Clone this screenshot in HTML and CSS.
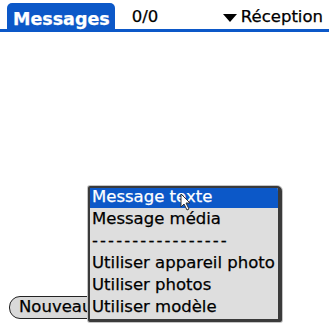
FILE: index.html
```html
<!DOCTYPE html>
<html>
<head>
<meta charset="utf-8">
<link rel="stylesheet" href="styles.css">
</head>
<body>
<div class="screen">
  <div class="header">
    <div class="tab">Messages</div>
    <div class="count">0/0</div>
    <div class="spacer"></div>
    <div class="folder">
      <svg class="tri" width="14" height="8" viewBox="0 0 14 8"><polygon points="0,0 14,0 7,8" fill="#000"/></svg>
      <span>Réception</span>
    </div>
  </div>
  <div class="content"></div>
  <div class="footer">
    <div class="btn">Nouveau</div>
  </div>
  <div class="menu">
    <div class="item sel">Message texte<svg class="cursor" width="12" height="18" viewBox="0 0 12 18"><path d="M1 1 L1 14 L4 11 L7 17 L9 16 L6 10 L10 10 Z" fill="#fff" stroke="#333" stroke-width="1"/></svg></div>
    <div class="item">Message média</div>
    <div class="item dash">-----------------</div>
    <div class="item">Utiliser appareil photo</div>
    <div class="item">Utiliser photos</div>
    <div class="item">Utiliser modèle</div>
  </div>
</div>
</body>
</html>
```
FILE: styles.css
```css
* { box-sizing: border-box; }
html, body { margin: 0; padding: 0; background: #fff; }
.screen {
  position: relative;
  width: 329px;
  height: 323px;
  display: flex;
  flex-direction: column;
  font-family: "DejaVu Sans", sans-serif;
  font-size: 16.5px;
  -webkit-text-stroke: 0.25px currentColor;
  color: #000;
  overflow: hidden;
}
.header {
  height: 32px;
  display: flex;
  align-items: flex-end;
  border-bottom: 3px solid #0c58c8;
}
.tab {
  margin-left: 7px;
  height: 26px;
  padding: 6px 5px 0 6px;
  line-height: 20px;
  background: #0c58c8;
  color: #fff;
  font-weight: bold;
  font-size: 17.5px;
  border-radius: 5px 5px 0 0;
}
.count {
  margin-left: 17px;
  line-height: 20px;
  padding-bottom: 2px;
}
.spacer { flex: 1; }
.folder {
  display: flex;
  align-items: center;
  gap: 4px;
  margin-right: 6px;
  line-height: 20px;
  padding-bottom: 2px;
}
.tri { display: block; margin-top: 1px; }
.content { flex: 1; }
.footer {
  padding: 0 0 4px 9px;
}
.btn {
  width: 110px;
  height: 23px;
  border: 1.5px solid #222;
  border-radius: 11px;
  background: #d9d9d9;
  padding-left: 9px;
  line-height: 20px;
}
.menu {
  position: absolute;
  left: 88px;
  top: 186px;
  width: 194px;
  height: 136px;
  border: 2px solid #3a3a3a;
  border-right-width: 4px;
  border-bottom-width: 3px;
  border-radius: 2px 5px 2px 2px;
  box-shadow: 0 0 0 1px #c4c4c4;
  background: #dedede;
  overflow: hidden;
}
.item {
  position: relative;
  height: 22px;
  line-height: 18px;
  padding-left: 2px;
  white-space: nowrap;
}
.item.sel {
  color: #fff;
  background: linear-gradient(#0c58c8, #0c58c8) top / 100% 20px no-repeat;
}
.item.dash { letter-spacing: 2.1px; }
.cursor {
  position: absolute;
  left: 90px;
  top: 5px;
  -webkit-text-stroke: 0;
}
```
